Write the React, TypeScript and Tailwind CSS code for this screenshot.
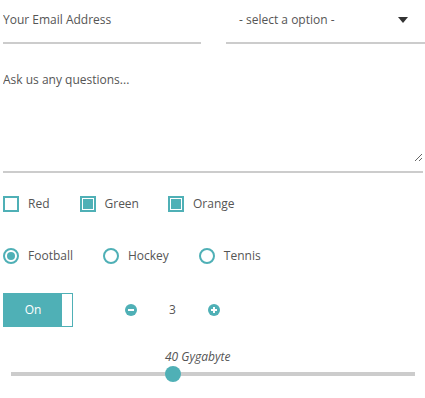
import React from "react";

const TEAL = "#4fb0b6";

function Checkbox({ label, checked, className }: { label: string; checked?: boolean; className?: string }) {
  return (
    <div className={"flex items-center gap-[9px] " + (className ?? "")}>
      <div className="w-[16px] h-[16px] border-2 border-[#4fb0b6] p-[1px] box-border">
        {checked && <div className="w-full h-full bg-[#4fb0b6]" />}
      </div>
      <span>{label}</span>
    </div>
  );
}

function Radio({ label, checked }: { label: string; checked?: boolean }) {
  return (
    <div className="flex items-center gap-[9px]">
      <div className="w-[16px] h-[16px] rounded-full border-2 border-[#4fb0b6] flex items-center justify-center box-border">
        {checked && <div className="w-[8px] h-[8px] rounded-full bg-[#4fb0b6]" />}
      </div>
      <span>{label}</span>
    </div>
  );
}

function CircleIcon({ plus }: { plus?: boolean }) {
  return (
    <svg width="12" height="12" viewBox="0 0 12 12">
      <circle cx="6" cy="6" r="6" fill={TEAL} />
      <rect x="3" y="5" width="6" height="2" fill="#fff" />
      {plus && <rect x="5" y="3" width="2" height="6" fill="#fff" />}
    </svg>
  );
}

export default function App() {
  return (
    <div className="w-[425px] h-[398px] bg-white font-['Open_Sans',sans-serif] text-[12px] text-[#555] overflow-hidden">
      <div className="flex h-[44px]">
        <input
          className="ml-[3px] w-[198px] h-[44px] border-b-2 border-[#ccc] pb-[3px] outline-none bg-transparent placeholder:text-[#555] text-[12px]"
          placeholder="Your Email Address"
        />
        <div className="ml-[25px] flex-1 h-[44px] border-b-2 border-[#ccc] flex items-center pl-[13px] pr-[17px] pb-[3px]">
          <span className="flex-1">- select a option -</span>
          <svg width="10" height="6" viewBox="0 0 10 6">
            <path d="M0 0 L10 0 L5 6 Z" fill="#333" />
          </svg>
        </div>
      </div>

      <div className="mt-[16px] ml-[3px] w-[420px] border-b-2 border-[#ccc] pb-[9px]">
        <textarea
          className="block w-full h-[102px] pt-[11px] resize-y outline-none bg-transparent placeholder:text-[#555] text-[12px]"
          placeholder="Ask us any questions..."
        />
      </div>

      <div className="mt-[23px] ml-[3px] flex items-center h-[16px]">
        <Checkbox label="Red" />
        <Checkbox label="Green" checked className="ml-[30px]" />
        <Checkbox label="Orange" checked className="ml-[29px]" />
      </div>

      <div className="mt-[36px] ml-[3px] flex items-center gap-[30px] h-[16px]">
        <Radio label="Football" checked />
        <Radio label="Hockey" />
        <Radio label="Tennis" />
      </div>

      <div className="mt-[29px] ml-[3px] flex items-center">
        <div className="flex w-[70px] h-[34px] border border-[#4fb0b6] box-border">
          <div className="w-[58px] h-full bg-[#4fb0b6] text-white flex items-center justify-center">On</div>
          <div className="flex-1 bg-white" />
        </div>
        <div className="ml-[52px] flex items-center">
          <CircleIcon />
        </div>
        <span className="ml-[32px] w-[6px] text-center">3</span>
        <div className="ml-[33px] flex items-center">
          <CircleIcon plus />
        </div>
      </div>

      <div className="mt-[22px] ml-[165px] italic leading-[16px]">40 Gygabyte</div>
      <div className="mt-[7px] ml-[11px] w-[404px] h-[4px] bg-[#ccc] relative">
        <div className="absolute left-[154px] top-[-6px] w-[16px] h-[16px] rounded-full bg-[#4fb0b6]" />
      </div>
    </div>
  );
}
